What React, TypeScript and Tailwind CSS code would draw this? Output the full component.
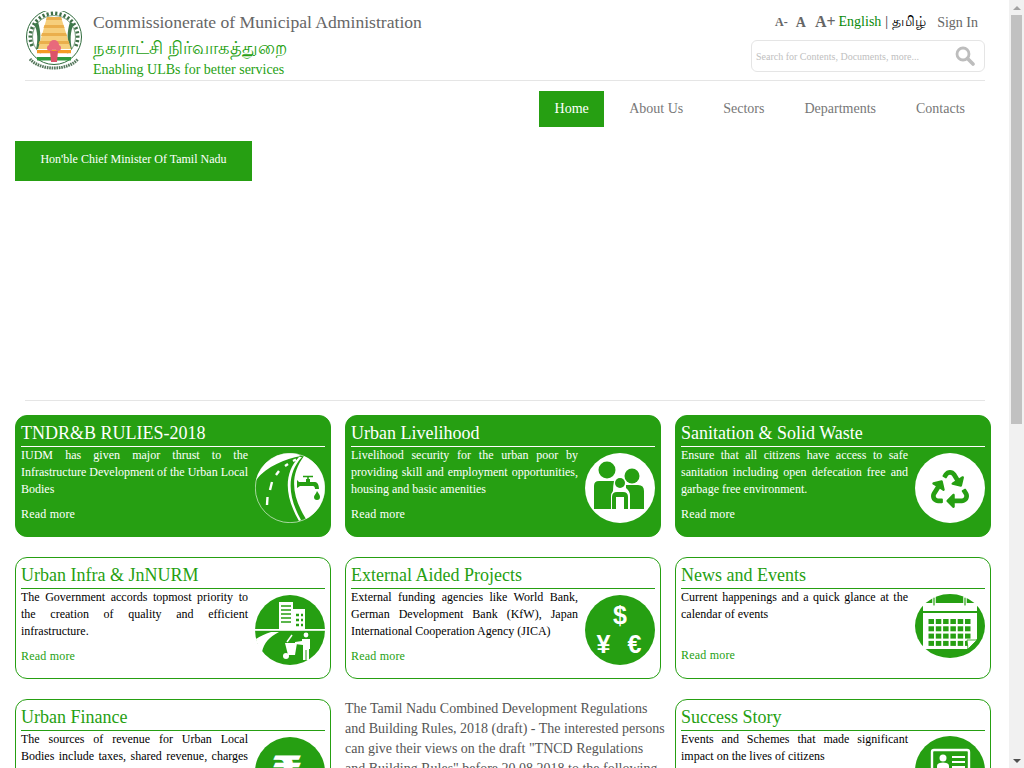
import type { ReactNode } from 'react';
import { FaRecycle } from 'react-icons/fa';

const GREEN = '#269f12';

function Emblem() {
  const marks = Array.from({ length: 22 }, (_, i) => -110 + (i * 220) / 21);
  return (
    <svg width="58" height="60" viewBox="0 0 58 60" aria-hidden="true">
      <circle cx="28" cy="26" r="27.500" fill="#fff" stroke="#2f6b3c" strokeWidth="1" />
      <circle cx="28" cy="26" r="21.500" fill="#fff" stroke="#5d8a63" strokeWidth="0.800" />
      {marks.map((deg) => (
        <rect key={deg} x="27" y="0.500" width="2.200" height="3.600" fill="#3f7048" transform={`rotate(${deg} 28 26)`} />
      ))}
      <path d="M8 13 C12 20 12 30 10 38 L13 38 C15 30 15 20 12 11Z" fill="#3f7a4b" />
      <path d="M48 13 C44 20 44 30 46 38 L43 38 C41 30 41 20 44 11Z" fill="#3f7a4b" />
      <path d="M21 6 H35 L45 38 H12Z" fill="#f6cf7c" />
      <path d="M21 6 H35 L36 9 H20Z M18.500 14 H37.500 L38.500 17 H17.500Z M16 22 H40 L41 25 H15Z M13.500 30 H42.500 L43.500 33 H12.500Z" fill="#eaaf4c" />
      <rect x="11" y="39" width="34" height="3.500" fill="#f39a25" />
      <rect x="11" y="42.500" width="34" height="3.500" fill="#fff" />
      <rect x="11" y="46" width="34" height="3.500" fill="#2f9a3e" />
      <circle cx="28" cy="34" r="5" fill="#e86a7c" />
      <circle cx="24" cy="37" r="3" fill="#e86a7c" />
      <circle cx="32" cy="37" r="3" fill="#e86a7c" />
      <path d="M24 40 H32 L31 51 H25Z" fill="#dc5269" />
      <path d="M4 48 C14 60 42 60 52 48" fill="none" stroke="#55775c" strokeWidth="3" strokeDasharray="1.600 0.800" />
    </svg>
  );
}

function SearchGlyph() {
  return (
    <svg width="20" height="20" viewBox="0 0 20 20" aria-hidden="true">
      <circle cx="8" cy="8" r="6" fill="none" stroke="#bdbdbd" strokeWidth="2.800" />
      <path d="M12.500 12.500 L18 18" stroke="#bdbdbd" strokeWidth="3.600" strokeLinecap="round" />
    </svg>
  );
}

function RoadIcon() {
  return (
    <svg width="70" height="70" viewBox="0 0 70 70" aria-hidden="true">
      <circle cx="35" cy="35" r="34.700" fill={GREEN} stroke="#fff" strokeWidth="0.600" />
      <path d="M1 27 A35 35 0 0 1 42 1 L46 3 C30 6 12 13 1 27Z" fill="#fff" />
      <path d="M47 4 C32 20 32 42 46 67 L44 68 C29 42 29 20 44 4Z" fill="#fff" />
      <path d="M49 3 A35 35 0 0 1 51 66 C36 42 35 22 49 3Z" fill="#fff" />
      <path d="M12 52 L12.500 44 M15 37 L17 29 M21 22 L24 18 M30 13 L33 11 M38 8 L41 6.500" stroke="#fff" strokeWidth="2.400" fill="none" />
      <path d="M42 27 L44 29 H51 V26 H55 V29 H60 C63 29 64 33 64 36 H60 C60 34 59 33 58 33 H45 L42 35Z" fill={GREEN} />
      <path d="M48 23.500 H58" stroke={GREEN} strokeWidth="1.600" />
      <path d="M53 23.500 V27" stroke={GREEN} strokeWidth="1.600" />
      <path d="M62 38 C64 41 65 42 65 44 A3 3 0 0 1 59 44 C59 42 61 41 62 38Z" fill={GREEN} />
    </svg>
  );
}

function FamilyIcon() {
  return (
    <svg width="70" height="70" viewBox="0 0 70 70" aria-hidden="true">
      <circle cx="35" cy="35" r="35" fill="#fff" />
      <g fill={GREEN}>
        <circle cx="22" cy="17" r="8.500" />
        <circle cx="47" cy="23" r="7.500" />
        <path d="M9 33 Q9 28 14 28 H29 Q28 33 28 38 Q26 40 26 44 V56 H9Z" />
        <path d="M41 32 H53 Q59 32 59 38 V56 H45 V43 Q45 38 41 35Z" />
        <circle cx="35" cy="30" r="5" />
        <path d="M27 56 V44 Q27 39 32 39 H38 Q43 39 43 44 V56 H39 V44 H31 V56Z" />
      </g>
    </svg>
  );
}

function RecycleIcon() {
  return (
    <div className="flex h-[70px] w-[70px] items-center justify-center rounded-full bg-white pt-[2px] text-[#269f12]">
      <FaRecycle size={38} />
    </div>
  );
}

function InfraIcon() {
  return (
    <svg width="70" height="70" viewBox="0 0 70 70" aria-hidden="true">
      <circle cx="35" cy="35" r="35" fill={GREEN} />
      <rect x="0" y="34" width="70" height="1.800" fill="#fff" />
      <rect x="24" y="7" width="14" height="27" fill="#fff" />
      <path d="M26 11 H36 M26 15 H36 M26 19 H36 M26 23 H36 M26 27 H36" stroke={GREEN} strokeWidth="1.500" />
      <rect x="38" y="14" width="12" height="20" fill="#fff" />
      <path d="M41 20 H44 M46 20 H48 M41 25 H44 M46 25 H48 M41 30 H44 M46 30 H48" stroke={GREEN} strokeWidth="2.500" />
      <path d="M16 37 H24 C14 42 9 48 7 57 C3 52 2 48 1 44 C5 41 10 39 16 37Z" fill="#fff" />
      <circle cx="51" cy="40" r="2.400" fill="#fff" />
      <path d="M47 44 H55 V54 H54 V65 H51.500 V55 H50.500 V65 H48 V50 L40 49 V47 L47 46Z" fill="#fff" />
      <path d="M30 48 H42 L40 60 H33Z" fill="#fff" />
      <path d="M32 47 L37 40" stroke="#fff" strokeWidth="1.500" />
      <circle cx="31" cy="61" r="3" fill="#fff" />
    </svg>
  );
}

function MoneyIcon() {
  return (
    <svg width="70" height="70" viewBox="0 0 70 70" aria-hidden="true">
      <circle cx="35" cy="35" r="35" fill={GREEN} />
      <g fill="#fff" fontFamily="'Liberation Sans', sans-serif" fontWeight="700" textAnchor="middle">
        <text x="35" y="29" fontSize="25">$</text>
        <text x="18.500" y="58" fontSize="25">¥</text>
        <text x="49.500" y="58" fontSize="25">€</text>
      </g>
    </svg>
  );
}

function CalendarIcon() {
  const cells = [];
  for (let r = 0; r < 4; r++) {
    for (let c = 0; c < 6; c++) {
      cells.push(<rect key={`${r}-${c}`} x={13.500 + c * 7.300} y={25 + r * 7.300} width="5.500" height="5" fill={GREEN} />);
    }
  }
  return (
    <svg width="70" height="64" viewBox="0 0 70 64" aria-hidden="true">
      <ellipse cx="35" cy="32" rx="35" ry="32" fill={GREEN} />
      <rect x="8" y="9" width="54" height="8" fill="#fff" />
      <path d="M8 19 H62 V45 L52 55 H8Z" fill="#fff" />
      {cells}
      <path d="M52 46 H62 L53 55Z" fill="#fff" stroke={GREEN} strokeWidth="0.800" />
      <path d="M19 3 V12 M50 3 V12" stroke="#fff" strokeWidth="3.500" strokeLinecap="round" />
      <path d="M19 4 V11 M50 4 V11" stroke={GREEN} strokeWidth="1.200" strokeLinecap="round" />
    </svg>
  );
}

function RupeeIcon() {
  return (
    <svg width="70" height="70" viewBox="0 0 70 70" aria-hidden="true">
      <circle cx="35" cy="35" r="35" fill={GREEN} />
      <text x="32" y="52" fill="#fff" fontSize="46" fontWeight="700" textAnchor="middle" fontFamily="'DejaVu Sans', sans-serif">₹</text>
    </svg>
  );
}

function IdCardIcon() {
  return (
    <svg width="70" height="70" viewBox="0 0 70 70" aria-hidden="true">
      <circle cx="35" cy="35" r="35" fill={GREEN} />
      <rect x="17" y="14" width="37" height="30" rx="2" fill="none" stroke="#fff" strokeWidth="2.400" />
      <circle cx="28" cy="22" r="3.500" fill="#fff" />
      <path d="M22 36 V30 Q22 26.500 28 26.500 Q34 26.500 34 30 V36Z" fill="#fff" />
      <path d="M37 21 H50 M37 26 H50 M37 31 H50" stroke="#fff" strokeWidth="2" />
    </svg>
  );
}

interface Tile {
  title: string;
  text: string;
  icon: ReactNode;
  filled?: boolean;
  tight?: boolean;
}

function Card({ title, text, icon, filled, tight }: Tile) {
  return (
    <div className={`h-[122px] overflow-hidden rounded-[12px] border border-[#269f12] px-[5px] pt-[5px] ${filled ? 'bg-[#269f12] text-white' : 'bg-white text-black'}`}>
      <h3 className={`h-[26px] border-b text-[18px] leading-[24px] ${filled ? 'border-white text-white' : 'border-[#269f12] text-[#269f12]'}`}>
        {title}
      </h3>
      <div className="flex gap-[7px]">
        <div className="w-[227px]">
          <p className={`text-justify text-[12px] leading-[17px] ${tight ? 'h-[50px]' : 'h-[51px]'}`}>{text}</p>
          <a className={`mt-[8px] block text-[12px] leading-[17px] tracking-[0.2px] ${filled ? 'text-white' : 'text-[#269f12]'}`}>Read more</a>
        </div>
        <div className={tight ? 'pt-[5px]' : 'pt-[6px]'}>{icon}</div>
      </div>
    </div>
  );
}

export default function App() {
  const nav = ['About Us', 'Sectors', 'Departments', 'Contacts'];
  return (
    <div className="flex h-screen overflow-hidden bg-white font-['Liberation_Serif','Noto_Sans',serif]">
      <div className="h-screen w-[1009px] overflow-hidden">
        {/* Header */}
        <header className="ml-[25px] mr-[24px] flex h-[81px] justify-between border-b border-[#e5e5e5]">
          <div className="flex pt-[11px]">
            <div className="ml-[1px] w-[67px]">
              <Emblem />
            </div>
            <div>
              <div className="text-[17.6px] leading-[22px] text-[#666]">Commissionerate of Municipal Administration</div>
              <div className="mt-[3px] text-[18px] leading-[24px] text-[#269f12]">நகராட்சி நிர்வாகத்துறை</div>
              <div className="text-[14px] leading-[20px] text-[#269f12]">Enabling ULBs for better services</div>
            </div>
          </div>
          <div className="flex w-[234px] flex-col items-end pt-[11px]">
            <div className="flex h-[22px] items-center pr-[7px] text-[#666]">
              <span className="text-[12px] font-bold">A-</span>
              <span className="ml-[8px] text-[14px] font-bold">A</span>
              <span className="ml-[9px] text-[16px] font-bold">A+</span>
              <span className="ml-[3px] -mt-[2px] text-[14px] text-[#0a8a0a]">English</span>
              <span className="ml-[4px] -mt-[2px] text-[14px] text-[#333]">|</span>
              <span className="ml-[4px] -mt-[2px] text-[14px] text-black">தமிழ்</span>
              <span className="ml-[11px] text-[14px]">Sign In</span>
            </div>
            <div className="mt-[7px] flex h-[32px] w-[234px] items-center justify-between rounded-[6px] border border-[#e5e5e5] pl-[4px] pr-[9px]">
              <span className="text-[10px] text-[#c0c0c0]">Search for Contents, Documents, more...</span>
              <SearchGlyph />
            </div>
          </div>
        </header>

        {/* Nav */}
        <nav className="mt-[10px] flex h-[36px] justify-end pr-[24px] text-[14px] text-[#777]">
          <a className="mr-[5px] flex w-[65px] items-center justify-center bg-[#269f12] pb-[2px] text-white">Home</a>
          {nav.map((item) => (
            <a key={item} className="flex items-center px-[20px] pb-[2px]">{item}</a>
          ))}
        </nav>

        {/* Banner */}
        <div className="ml-[15px] mt-[14px] flex h-[40px] w-[237px] items-center justify-center bg-[#269f12] pb-[5px] text-[12px] text-white">
          Hon'ble Chief Minister Of Tamil Nadu
        </div>
        <div className="ml-[25px] mr-[24px] mt-[219px] border-b border-[#e5e5e5]" />

        {/* Cards */}
        <div className="ml-[15px] mt-[14px] grid grid-cols-[316px_316px_316px] gap-x-[14px] gap-y-[20px]">
          <Card filled title="TNDR&B RULIES-2018" text="IUDM has given major thrust to the Infrastructure Development of the Urban Local Bodies" icon={<RoadIcon />} />
          <Card filled title="Urban Livelihood" text="Livelihood security for the urban poor by providing skill and employment opportunities, housing and basic amenities" icon={<FamilyIcon />} />
          <Card filled title="Sanitation & Solid Waste" text="Ensure that all citizens have access to safe sanitation including open defecation free and garbage free environment." icon={<RecycleIcon />} />
          <Card title="Urban Infra & JnNURM" text="The Government accords topmost priority to the creation of quality and efficient infrastructure." icon={<InfraIcon />} />
          <Card title="External Aided Projects" text="External funding agencies like World Bank, German Development Bank (KfW), Japan International Cooperation Agency (JICA)" icon={<MoneyIcon />} />
          <Card tight title="News and Events" text="Current happenings and a quick glance at the calendar of events" icon={<CalendarIcon />} />
          <Card title="Urban Finance" text="The sources of revenue for Urban Local Bodies include taxes, shared revenue, charges and grants from the Government" icon={<RupeeIcon />} />
          <p className="w-[320px] text-[14px] leading-[20px] text-[#555]">
            The Tamil Nadu Combined Development Regulations and Building Rules, 2018 (draft) - The interested persons can give their views on the draft "TNCD Regulations and Building Rules" before 20.08.2018 to the following
          </p>
          <Card tight title="Success Story" text="Events and Schemes that made significant impact on the lives of citizens" icon={<IdCardIcon />} />
        </div>
      </div>

      {/* Scrollbar */}
      <div className="flex h-screen w-[15px] flex-col bg-[#f1f1f1]">
        <div className="flex h-[15px] items-center justify-center">
          <div className="h-0 w-0 border-x-[4px] border-b-[4px] border-x-transparent border-b-[#a3a3a3]" />
        </div>
        <div className="mx-[2px] h-[409px] bg-[#c1c1c1]" />
        <div className="flex-1" />
        <div className="flex h-[15px] items-center justify-center">
          <div className="h-0 w-0 border-x-[4px] border-t-[4px] border-x-transparent border-t-[#505050]" />
        </div>
      </div>
    </div>
  );
}
